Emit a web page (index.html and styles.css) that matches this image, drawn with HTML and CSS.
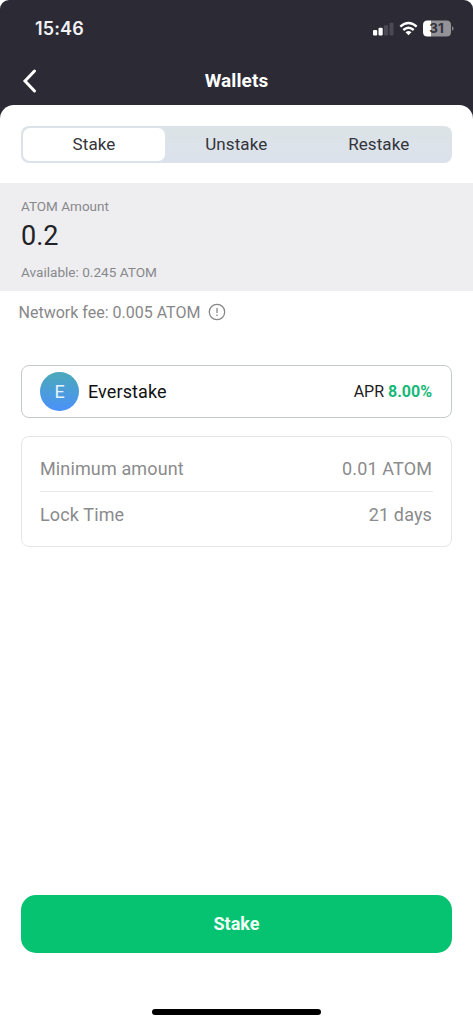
FILE: index.html
```html
<!DOCTYPE html>
<html lang="en">
<head>
<meta charset="utf-8">
<title>Wallets</title>
<link rel="stylesheet" href="styles.css">
</head>
<body>
<div class="screen">
  <header class="top">
    <div class="status">
      <span class="time">15:46</span>
      <svg class="indicators" width="82" height="20" viewBox="0 0 82 20">
        <rect x="1" y="12" width="4.200" height="5.500" rx="1" fill="#fff"/>
        <rect x="6.500" y="9.800" width="4.200" height="7.700" rx="1" fill="#fff"/>
        <rect x="12" y="7.200" width="4" height="10.300" rx="1" fill="#4b4a54"/>
        <rect x="17.500" y="4.800" width="4" height="12.700" rx="1" fill="#4b4a54"/>
        <g fill="none" stroke="#fff" stroke-width="2.400">
          <path d="M28.300 8.600Q36.500 1.600 44.700 8.600"/>
          <path d="M31.300 12Q36.500 7.600 41.700 12"/>
        </g>
        <path d="M33.500 14.200Q36.500 12 39.500 14.200L36.500 17.200Z" fill="#fff"/>
        <path d="M55.500 2.500H59V18.500H55.500Q51 18.500 51 14V7Q51 2.500 55.500 2.500Z" fill="#fff"/>
        <path d="M59 2.500H74.500Q79 2.500 79 7V14Q79 18.500 74.500 18.500H59Z" fill="#929297"/>
        <path d="M80 8.300Q81.600 8.600 81.600 10.500Q81.600 12.300 80 12.700Z" fill="#85858b"/>
        <text class="charge" x="64.600" y="15.300" text-anchor="middle">31</text>
      </svg>
    </div>
    <div class="nav">
      <svg class="back" width="16" height="24" viewBox="0 0 16 24"><path d="M13.500 2L4 12L13.500 22" fill="none" stroke="#fff" stroke-width="3" stroke-linecap="round"/></svg>
      <h1 class="title">Wallets</h1>
    </div>
  </header>
  <main class="sheet">
    <div class="tabs">
      <div class="tab active">Stake</div>
      <div class="tab">Unstake</div>
      <div class="tab">Restake</div>
    </div>
    <section class="amount">
      <div class="amount-label">ATOM Amount</div>
      <div class="amount-value">0.2</div>
      <div class="available">Available: 0.245 ATOM</div>
    </section>
    <div class="fee">
      <span>Network fee: 0.005 ATOM</span>
      <svg width="18" height="18" viewBox="0 0 18 18"><circle cx="9" cy="9" r="7.700" fill="none" stroke="#88888a" stroke-width="1.300"/><path d="M9 5V10M9 11.600V13" stroke="#88888a" stroke-width="1.300"/></svg>
    </div>
    <div class="validator">
      <div class="avatar">E</div>
      <div class="name">Everstake</div>
      <div class="apr">APR <b>8.00%</b></div>
    </div>
    <div class="details">
      <div class="row"><span>Minimum amount</span><span>0.01 ATOM</span></div>
      <div class="row"><span>Lock Time</span><span>21 days</span></div>
    </div>
    <button class="submit">Stake</button>
    <div class="home"></div>
  </main>
</div>
</body>
</html>
```
FILE: styles.css
```css
* { box-sizing: border-box; }
body { margin: 0; background: #fff; font-family: Roboto, sans-serif; }
.screen {
  width: 473px;
  height: 1024px;
  display: flex;
  flex-direction: column;
  background: linear-gradient(#2c2b35 0 150px, #fff 150px);
  border-radius: 9px 9px 0 0;
  overflow: hidden;
}
.top { height: 105px; color: #fff; }
.status {
  height: 55px;
  padding: 3px 19px 0 35px;
  display: flex;
  align-items: center;
  justify-content: space-between;
}
.time { font: 600 18px/22px Inter, sans-serif; letter-spacing: .15px; color: #f2f2f6; }
.indicators { display: block; margin-top: -2px; }
.charge { font: 700 13.5px Inter, sans-serif; fill: #34333d; }
.nav {
  height: 50px;
  padding: 1px 20px 0;
  display: grid;
  grid-template-columns: 20px 1fr 20px;
  align-items: center;
}
.back { display: block; margin-left: 1px; }
.title { margin: 0; text-align: center; font-size: 19px; line-height: 24px; font-weight: 700; letter-spacing: .1px; }
.sheet {
  flex: 1;
  display: flex;
  flex-direction: column;
  background: #fff;
  border-radius: 14px 14px 0 0;
}
.tabs {
  height: 37px;
  margin: 21px 21px 20px;
  padding: 2px;
  display: grid;
  grid-template-columns: 142px 1fr 1fr;
  background: linear-gradient(#dbe3e6, #dce2ec);
  border-radius: 8px;
}
.tab {
  display: flex;
  align-items: center;
  justify-content: center;
  padding-bottom: 2px;
  font-size: 17px;
  letter-spacing: .1px;
  color: #34343b;
}
.active { background: #fff; border-radius: 7px; }
.amount { height: 108px; padding: 14px 21px 0; background: #eeeef0; color: #88888c; }
.amount-label { font-size: 13.5px; line-height: 18px; }
.amount-value { margin-top: 4px; font-size: 27px; line-height: 34px; color: #222226; }
.available { margin-top: 10px; font-size: 13.6px; line-height: 18px; }
.fee {
  height: 42px;
  padding-left: 18.500px;
  display: flex;
  align-items: center;
  gap: 7.500px;
  font-size: 16px;
  color: #88888a;
}
.validator {
  height: 53px;
  margin: 32px 21px 0;
  padding: 0 19px 0 18px;
  display: flex;
  align-items: center;
  border: 1px solid #c5cacb;
  border-radius: 8px;
}
.avatar {
  width: 39px;
  height: 39px;
  display: flex;
  align-items: center;
  justify-content: center;
  border-radius: 50%;
  background: linear-gradient(#4ba9b8, #4b91fa);
  color: #e4f4ff;
  font-size: 18px;
}
.name { margin-left: 9px; font-size: 18px; letter-spacing: .1px; color: #111; }
.apr { margin-left: auto; font-size: 16px; color: #1d1d20; }
.apr b { color: #17b978; }
.details {
  height: 111px;
  margin: 18px 21px 0;
  padding: 9px 18px;
  border: 1px solid #e5e6e7;
  border-radius: 8px;
}
.row {
  height: 46px;
  padding-right: 1px;
  display: flex;
  align-items: center;
  justify-content: space-between;
  font-size: 18px;
  letter-spacing: .13px;
  color: #8b8b8d;
}
.row:first-child { border-bottom: 1px solid #e8e8e9; }
.row:last-child { height: 44px; }
.submit {
  height: 58px;
  margin: auto 21px 0;
  padding: 0 0 2px;
  border: 0;
  border-radius: 15px;
  background: #05c370;
  color: #f2fff8;
  font: 700 18px Roboto, sans-serif;
}
.home { width: 169px; height: 6px; margin: 56px auto 9px; border-radius: 3px; background: #000; }
```
